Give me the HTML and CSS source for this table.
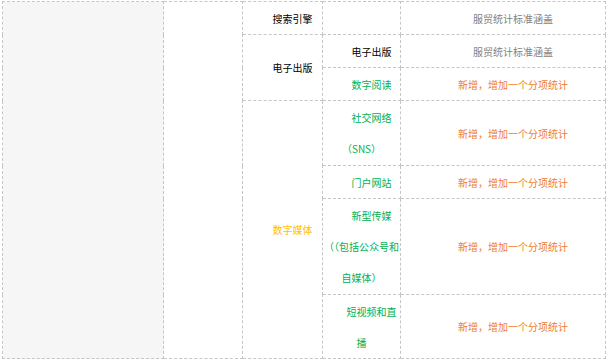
FILE: index.html
```html
<!DOCTYPE html>
<html lang="zh">
<head>
<meta charset="utf-8">
<title>统计表</title>
<link rel="stylesheet" href="styles.css">
</head>
<body>
<table class="grid">
  <colgroup>
    <col class="c1"><col class="c2"><col class="c3"><col class="c4"><col class="c5">
  </colgroup>
  <tbody>
    <tr class="r1">
      <td class="side" rowspan="7"></td>
      <td class="blank" rowspan="7"></td>
      <td class="t-black">搜索引擎</td>
      <td></td>
      <td class="t-gray">服贸统计标准涵盖</td>
    </tr>
    <tr class="r1">
      <td class="t-black" rowspan="2">电子出版</td>
      <td class="t-black">电子出版</td>
      <td class="t-gray">服贸统计标准涵盖</td>
    </tr>
    <tr class="r1">
      <td class="t-green">数字阅读</td>
      <td class="t-orange">新增，增加一个分项统计</td>
    </tr>
    <tr class="r2">
      <td class="t-gold" rowspan="4">数字媒体</td>
      <td class="t-green">社交网络（SNS）</td>
      <td class="t-orange">新增，增加一个分项统计</td>
    </tr>
    <tr class="r1">
      <td class="t-green">门户网站</td>
      <td class="t-orange">新增，增加一个分项统计</td>
    </tr>
    <tr class="r3">
      <td class="t-green">新型传媒（（包括公众号和自媒体）</td>
      <td class="t-orange">新增，增加一个分项统计</td>
    </tr>
    <tr class="r4">
      <td class="t-green">短视频和直播</td>
      <td class="t-orange">新增，增加一个分项统计</td>
    </tr>
  </tbody>
</table>
</body>
</html>
```

FILE: styles.css
```css
html, body {
  margin: 0;
  padding: 0;
  background: #ffffff;
}

body {
  padding: 1px 0 0 2px;
  font-family: "Noto Sans CJK SC", "Noto Sans", sans-serif;
  font-size: 10px;
}

.grid {
  border-collapse: collapse;
  table-layout: fixed;
  width: 603px;
}

.c1 { width: 161px; }
.c2 { width: 79px; }
.c3 { width: 80px; }
.c4 { width: 78px; }
.c5 { width: 205px; }

.grid td {
  border: 1px dashed #c6c6c6;
  padding: 0;
  text-align: center;
  text-indent: 2em;
  line-height: 31px;
  vertical-align: middle;
}

.r1 td { height: 32px; }
.r2 td { height: 64px; }
.r3 td { height: 95px; }
.r4 td { height: 63px; }

.grid td.side {
  background: #f6f6f6;
}

.t-black { color: #000000; }
.t-gray { color: #7f7f7f; }
.t-green { color: #00b050; }
.t-orange { color: #ed7d31; }
.t-gold { color: #ffc000; }
```
